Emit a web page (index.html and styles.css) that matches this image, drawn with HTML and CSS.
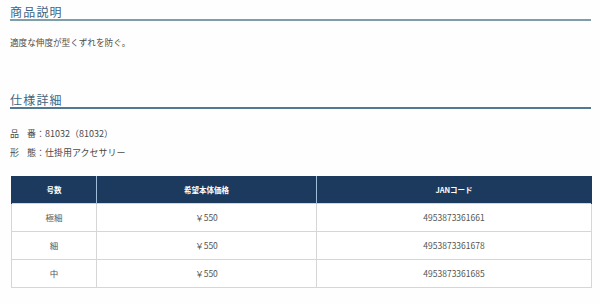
FILE: index.html
```html
<!DOCTYPE html>
<html lang="ja">
<head>
<meta charset="utf-8">
<link rel="stylesheet" href="styles.css">
</head>
<body>
<div class="page">
  <h2 class="heading heading-first">商品説明</h2>
  <p class="desc">適度な伸度が型くずれを防ぐ。</p>
  <h2 class="heading heading-second">仕様詳細</h2>
  <div class="specs">
    <p class="spec">品 番：81032（81032）</p>
    <p class="spec">形 態：仕掛用アクセサリー</p>
  </div>
  <table class="tbl">
    <colgroup>
      <col class="c1"><col class="c2"><col class="c3">
    </colgroup>
    <thead>
      <tr><th>号数</th><th>希望本体価格</th><th>JANコード</th></tr>
    </thead>
    <tbody>
      <tr><td>極細</td><td>￥550</td><td>4953873361661</td></tr>
      <tr><td>細</td><td>￥550</td><td>4953873361678</td></tr>
      <tr><td>中</td><td>￥550</td><td>4953873361685</td></tr>
    </tbody>
  </table>
</div>
</body>
</html>
```

FILE: styles.css
```css
* { box-sizing: border-box; }
html, body { margin: 0; padding: 0; background: #fefefe; }
body {
  font-family: "Noto Sans CJK JP", "Noto Sans", sans-serif;
  color: #4a4a4a;
}
.page {
  padding: 5px 9px 0 10px;
  width: 600px;
}
.heading {
  margin: 0;
  font-size: 12px;
  line-height: 14px;
  font-weight: normal;
  letter-spacing: 1.2px;
  color: #3d6582;
  padding-bottom: 0;
}
.heading-first { border-bottom: 2px solid #7f9ea8; }
.heading-second { border-bottom: 2px solid #557892; }
.desc {
  margin: 15px 0 0 0;
  font-size: 8.6px;
  line-height: 12px;
  height: 57px;
}
.specs { margin-top: 15px; }
.spec {
  margin: 0;
  font-size: 9px;
  line-height: 19px;
  word-spacing: 6px;
}
.tbl {
  margin: 14px 0 0 1px;
  width: 580px;
  border-collapse: collapse;
  table-layout: fixed;
  font-size: 7.5px;
}
.c1 { width: 85px; }
.c2 { width: 220px; }
.c3 { width: 275px; }
.tbl th {
  background: #1b3a5e;
  color: #fff;
  font-weight: bold;
  height: 27px;
  padding: 0;
  border-left: 1px solid #9fbcd8;
  text-align: center;
}
.tbl th:first-child { border-left: 1px solid #1b3a5e; }
.tbl th:last-child { border-right: 1px solid #1b3a5e; }
.tbl td {
  height: 28px;
  padding: 0;
  text-align: center;
  color: #555;
  font-size: 8.5px;
  border: 1px solid #d6d6d6;
  background: #fff;
}
```
